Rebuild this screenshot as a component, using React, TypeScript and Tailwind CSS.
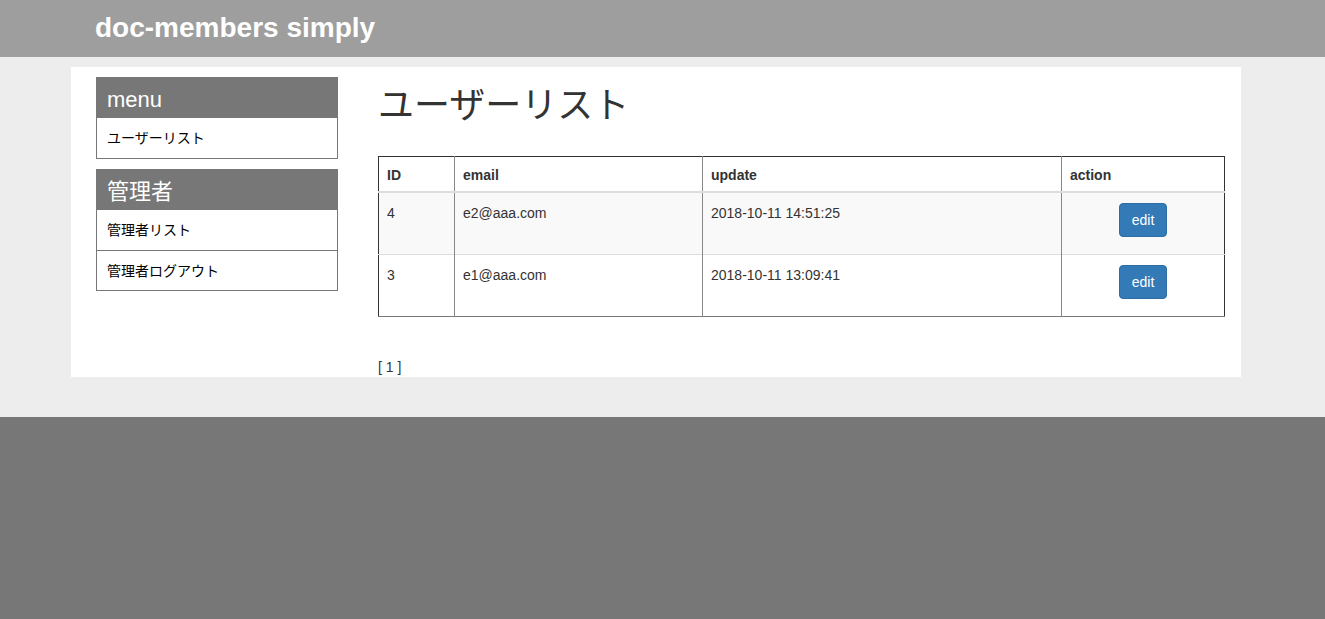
const font = "font-['Liberation_Sans','Noto_Sans_CJK_JP',sans-serif]";

type Row = { id: number; email: string; update: string };

const rows: Row[] = [
  { id: 4, email: "e2@aaa.com", update: "2018-10-11 14:51:25" },
  { id: 3, email: "e1@aaa.com", update: "2018-10-11 13:09:41" },
];

function SideBox({ title, items }: { title: string; items: string[] }) {
  return (
    <div className="border border-[#777] border-t-0">
      <div className="flex h-[41px] items-center bg-[#777] px-[10px] pt-[3px] text-[22px] text-white">
        {title}
      </div>
      {items.map((item, i) => (
        <div
          key={item}
          className={`flex h-10 items-center px-[10px] text-sm text-black ${i > 0 ? "border-t border-[#777]" : ""}`}
        >
          {item}
        </div>
      ))}
    </div>
  );
}

function EditButton() {
  return (
    <button className="h-[34px] w-12 rounded-[4px] border border-[#2e6da4] bg-[#337ab7] text-sm text-white">
      edit
    </button>
  );
}

export default function App() {
  return (
    <div className={`${font} flex min-h-screen flex-col bg-[#777] text-[#333]`}>
      <header className="flex h-[57px] items-center bg-[#9e9e9e] pb-[2px] pl-[95px]">
        <h1 className="text-[28px] font-bold text-white">doc-members simply</h1>
      </header>

      <div className="bg-[#ededed] pt-[10px] pb-10">
        <div className="ml-[71px] flex w-[1170px] bg-white pt-[10px] pl-[25px] pr-4">
          <aside className="flex w-[242px] shrink-0 flex-col gap-[10px]">
            <SideBox title="menu" items={["ユーザーリスト"]} />
            <SideBox title="管理者" items={["管理者リスト", "管理者ログアウト"]} />
          </aside>

          <main className="ml-10 flex-1">
            <h2 className="mt-[9px] text-[36px] leading-[1.1]">ユーザーリスト</h2>

            <table className="mt-[30px] w-full border-collapse border-x border-t border-b border-[#333] border-b-[#777] text-sm">
              <thead>
                <tr className="h-[36px] border-b-2 border-[#ddd]">
                  <th className="w-[76px] border-r border-[#888] px-2 pt-[3px] text-left font-bold">ID</th>
                  <th className="w-[248px] border-r border-[#888] px-2 pt-[3px] text-left font-bold">email</th>
                  <th className="w-[359px] border-r border-[#888] px-2 pt-[3px] text-left font-bold">update</th>
                  <th className="px-2 pt-[3px] text-left font-bold">action</th>
                </tr>
              </thead>
              <tbody>
                {rows.map((r, i) => (
                  <tr
                    key={r.id}
                    className={`h-[62px] ${i === 0 ? "bg-[#f9f9f9]" : "border-t border-[#ddd]"}`}
                  >
                    <td className="border-r border-[#888] px-2 pt-[10px] align-top">{r.id}</td>
                    <td className="border-r border-[#888] px-2 pt-[10px] align-top">{r.email}</td>
                    <td className="border-r border-[#888] px-2 pt-[10px] align-top">{r.update}</td>
                    <td className="px-2 pt-[10px] text-center align-top">
                      <EditButton />
                    </td>
                  </tr>
                ))}
              </tbody>
            </table>

            <p className="mt-10 text-sm leading-5">[ 1 ]</p>
          </main>
        </div>
      </div>
    </div>
  );
}
